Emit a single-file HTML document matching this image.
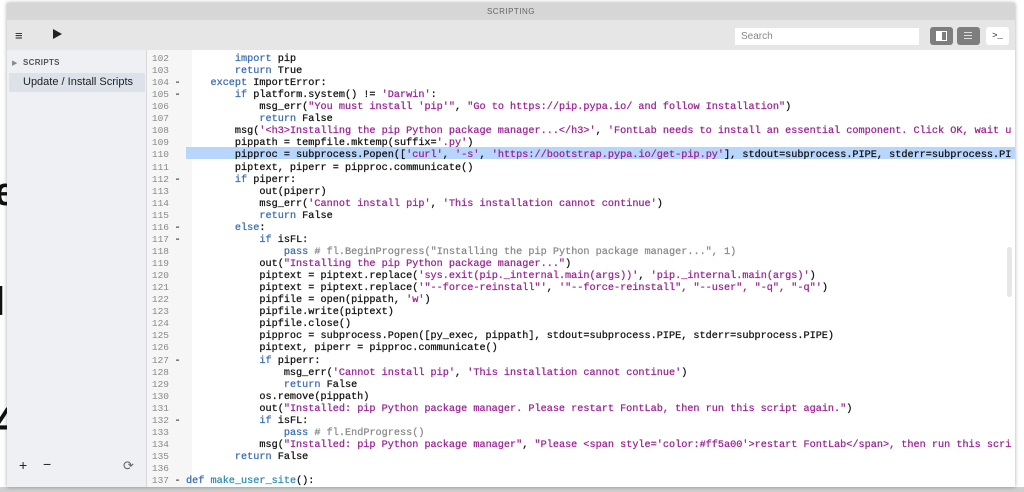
<!DOCTYPE html>
<html><head><meta charset="utf-8"><style>
*{margin:0;padding:0;box-sizing:border-box}
body{width:1024px;height:492px;overflow:hidden;background:#fff;font-family:"Liberation Sans",sans-serif;position:relative}
.bgl{position:absolute;font:bold 40px "Liberation Sans",sans-serif;color:#111}
#win{position:absolute;left:7px;top:3px;width:1008px;height:484px;background:#e9e9e9;box-shadow:0 0 4px rgba(0,0,0,.35);overflow:hidden}
#title{height:17px;background:#d6d6d6;text-align:center;font-size:8px;color:#666;line-height:17px;letter-spacing:.5px}
#tb{position:absolute;top:17px;left:0;right:0;height:30px;background:#e6e6e6}
#side{position:absolute;left:0;top:47px;width:140px;bottom:0;background:#eef0f3;border-right:1px solid #d8d8d8}
#ed{position:absolute;left:140px;top:47px;right:0;bottom:0;background:#fff}
#gut{position:absolute;left:0;top:0;width:45px;bottom:0;background:#f6f6f6}
.ln{position:absolute;left:0;height:12.06px;width:1000px;font:10.2px/12.06px "Liberation Mono",monospace;white-space:pre;color:#111;-webkit-text-stroke:0.25px currentColor}
.ln .n{display:inline-block;width:22px;text-align:right;color:#888;font-size:9.5px;-webkit-text-stroke:0}
.ln .fd{display:inline-block;width:17px;text-align:center;color:#333}
.k{color:#3c6db5}.s{color:#9c2396}.c{color:#8a8a8a}.f{color:#2b8db3}
.hl{position:absolute;left:39px;right:0;height:12px;background:#b8d6fb}
.btn{position:absolute;top:24px;width:23px;height:18px;border-radius:3px}
</style></head><body>
<div class="bgl" style="left:-6px;top:170px">e</div>
<div class="bgl" style="left:-6px;top:280px">l</div>
<div class="bgl" style="left:-6px;top:400px">4</div>
<div style="position:absolute;left:0;top:487px;width:1024px;height:5px;background:#cfcfcf"></div>
<div id="win">
<div id="title">SCRIPTING</div>
<div id="tb">
<div style="position:absolute;left:8px;top:8px;font-size:13px;color:#222">&#8801;</div>
<div style="position:absolute;left:46px;top:9px;width:0;height:0;border-left:9px solid #222;border-top:5px solid transparent;border-bottom:5px solid transparent"></div>
<div style="position:absolute;left:728px;top:8px;width:184px;height:17px;background:#fff;font-size:10px;color:#888;padding-left:6px;line-height:17px">Search</div>
</div>
<div class="btn" style="left:923px;background:#7e7e7e"><div style="position:absolute;left:6px;top:4px;width:11px;height:10px;border:1px solid #fff;background:linear-gradient(90deg,#fff 55%,#7e7e7e 55%)"></div></div>
<div class="btn" style="left:950px;background:#7e7e7e"><div style="position:absolute;left:7px;top:5px;width:8px;height:1px;background:#ddd;box-shadow:0 3px #ddd,0 6px #ddd"></div></div>
<div class="btn" style="left:979px;background:#fff;font:9px/18px 'Liberation Mono',monospace;text-align:center;color:#222">&gt;_</div>
<div id="side">
<div style="position:absolute;left:5px;top:9px;font-size:7px;color:#888">&#9654;</div>
<div style="position:absolute;left:16px;top:8px;font-size:8px;font-weight:bold;color:#555;letter-spacing:.3px">SCRIPTS</div>
<div style="position:absolute;left:2px;top:23px;width:136px;height:19px;background:#dce1ea"></div>
<div style="position:absolute;left:16px;top:26px;font-size:11px;color:#222">Update / Install Scripts</div>
<div style="position:absolute;left:12px;top:407px;font-size:14px;color:#222">+</div>
<div style="position:absolute;left:36px;top:406px;font-size:14px;color:#222">&minus;</div>
<div style="position:absolute;left:116px;top:408px;font-size:13px;color:#666">&#10227;</div>
</div>
<div id="ed">
<div id="gut"></div>
<div class="hl" style="top:96.5px"></div>
<div style="position:absolute;right:3px;top:197px;width:5px;height:50px;border-radius:3px;background:#e6e6e6"></div>
<div id="code"></div>
</div>
</div>
<script>
var L=[
[8,'<span class="k">import</span> pip'],
[8,'<span class="k">return</span> True'],
[4,'<span class="k">except</span> ImportError:',1],
[8,'<span class="k">if</span> platform.system() != <span class="s">\'Darwin\'</span>:',1],
[12,'msg_err(<span class="s">"You must install \'pip\'"</span>, <span class="s">"Go to https://pip.pypa.io/ and follow Installation"</span>)'],
[12,'<span class="k">return</span> False'],
[8,'msg(<span class="s">\'&lt;h3&gt;Installing the pip Python package manager...&lt;/h3&gt;\'</span>, <span class="s">\'FontLab needs to install an essential component. Click OK, wait u</span>'],
[8,'pippath = tempfile.mktemp(suffix=<span class="s">\'.py\'</span>)'],
[8,'pipproc = subprocess.Popen([<span class="s">\'curl\'</span>, <span class="s">\'-s\'</span>, <span class="s">\'https://bootstrap.pypa.io/get-pip.py\'</span>], stdout=subprocess.PIPE, stderr=subprocess.PI'],
[8,'piptext, piperr = pipproc.communicate()'],
[8,'<span class="k">if</span> piperr:',1],
[12,'out(piperr)'],
[12,'msg_err(<span class="s">\'Cannot install pip\'</span>, <span class="s">\'This installation cannot continue\'</span>)'],
[12,'<span class="k">return</span> False'],
[8,'<span class="k">else</span>:',1],
[12,'<span class="k">if</span> isFL:',1],
[16,'<span class="k">pass</span> <span class="c"># fl.BeginProgress("Installing the pip Python package manager...", 1)</span>'],
[12,'out(<span class="s">"Installing the pip Python package manager..."</span>)'],
[12,'piptext = piptext.replace(<span class="s">\'sys.exit(pip._internal.main(args))\'</span>, <span class="s">\'pip._internal.main(args)\'</span>)'],
[12,'piptext = piptext.replace(<span class="s">\'"--force-reinstall"\'</span>, <span class="s">\'"--force-reinstall", "--user", "-q", "-q"\'</span>)'],
[12,'pipfile = open(pippath, <span class="s">\'w\'</span>)'],
[12,'pipfile.write(piptext)'],
[12,'pipfile.close()'],
[12,'pipproc = subprocess.Popen([py_exec, pippath], stdout=subprocess.PIPE, stderr=subprocess.PIPE)'],
[12,'piptext, piperr = pipproc.communicate()'],
[12,'<span class="k">if</span> piperr:',1],
[16,'msg_err(<span class="s">\'Cannot install pip\'</span>, <span class="s">\'This installation cannot continue\'</span>)'],
[16,'<span class="k">return</span> False'],
[12,'os.remove(pippath)'],
[12,'out(<span class="s">"Installed: pip Python package manager. Please restart FontLab, then run this script again."</span>)'],
[12,'<span class="k">if</span> isFL:',1],
[16,'<span class="k">pass</span> <span class="c"># fl.EndProgress()</span>'],
[12,'msg(<span class="s">"Installed: pip Python package manager"</span>, <span class="s">"Please &lt;span style=\'color:#ff5a00\'&gt;restart FontLab&lt;/span&gt;, then run this scri</span>'],
[8,'<span class="k">return</span> False'],
[0,''],
[0,'<span class="k">def</span> <span class="f">make_user_site</span>():',1]
];
var h='';
for(var i=0;i<L.length;i++){
 var t=(i*12.06+3).toFixed(2);
 h+='<div class="ln" style="top:'+t+'px"><span class="n">'+(102+i)+'</span><span class="fd">'+(L[i][2]?'-':'')+'</span>'+' '.repeat(L[i][0])+L[i][1]+'</div>';
}
document.getElementById('code').innerHTML=h;
</script>
</body></html>
